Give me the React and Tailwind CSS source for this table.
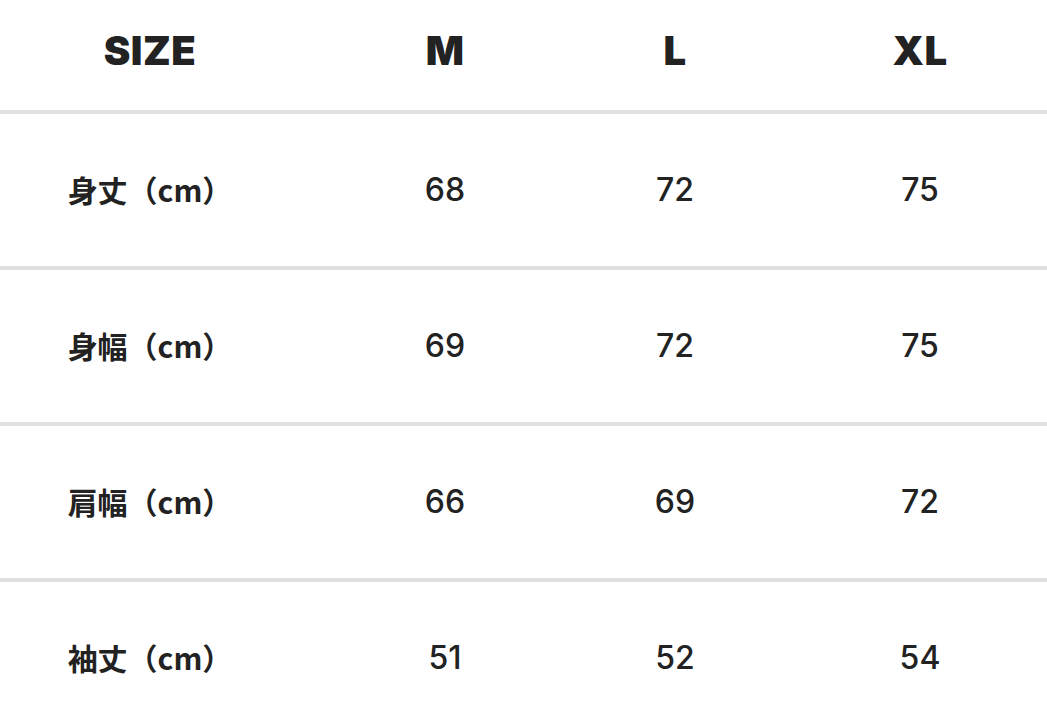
import React from 'react';

const rows = [
    { label: '身丈（cm）', m: '68', l: '72', xl: '75' },
    { label: '身幅（cm）', m: '69', l: '72', xl: '75' },
    { label: '肩幅（cm）', m: '66', l: '69', xl: '72' },
    { label: '袖丈（cm）', m: '51', l: '52', xl: '54' },
];

const cols = 'grid grid-cols-[300px_290px_170px_1fr] items-center';

const App = () => {
    return (
        <div className="bg-white w-full min-h-[720px] text-[#222222] font-['Noto_Sans_CJK_JP',sans-serif]">
            <div className={`${cols} h-[114px] border-b-4 border-[#e0e0e0] font-['Inter','Liberation_Sans',sans-serif] font-black text-[40px] tracking-[0.5px]`}>
                <div className="text-center -mt-[8px]">SIZE</div>
                <div className="text-center -mt-[8px]">M</div>
                <div className="text-center -mt-[8px]">L</div>
                <div className="text-center -mt-[8px] pl-[33px]">XL</div>
            </div>

            {rows.map((row) => (
                <div key={row.label} className={`${cols} h-[156px] border-b-4 border-[#e0e0e0]`}>
                    <div className="text-center text-[30px] font-bold -mt-[2px]">{row.label}</div>
                    <div className="text-center text-[32px] font-[550] font-['Inter','Noto_Sans',sans-serif]">{row.m}</div>
                    <div className="text-center text-[32px] font-[550] font-['Inter','Noto_Sans',sans-serif]">{row.l}</div>
                    <div className="text-center text-[32px] font-[550] font-['Inter','Noto_Sans',sans-serif] pl-[33px]">{row.xl}</div>
                </div>
            ))}
        </div>
    );
};

export default App;
